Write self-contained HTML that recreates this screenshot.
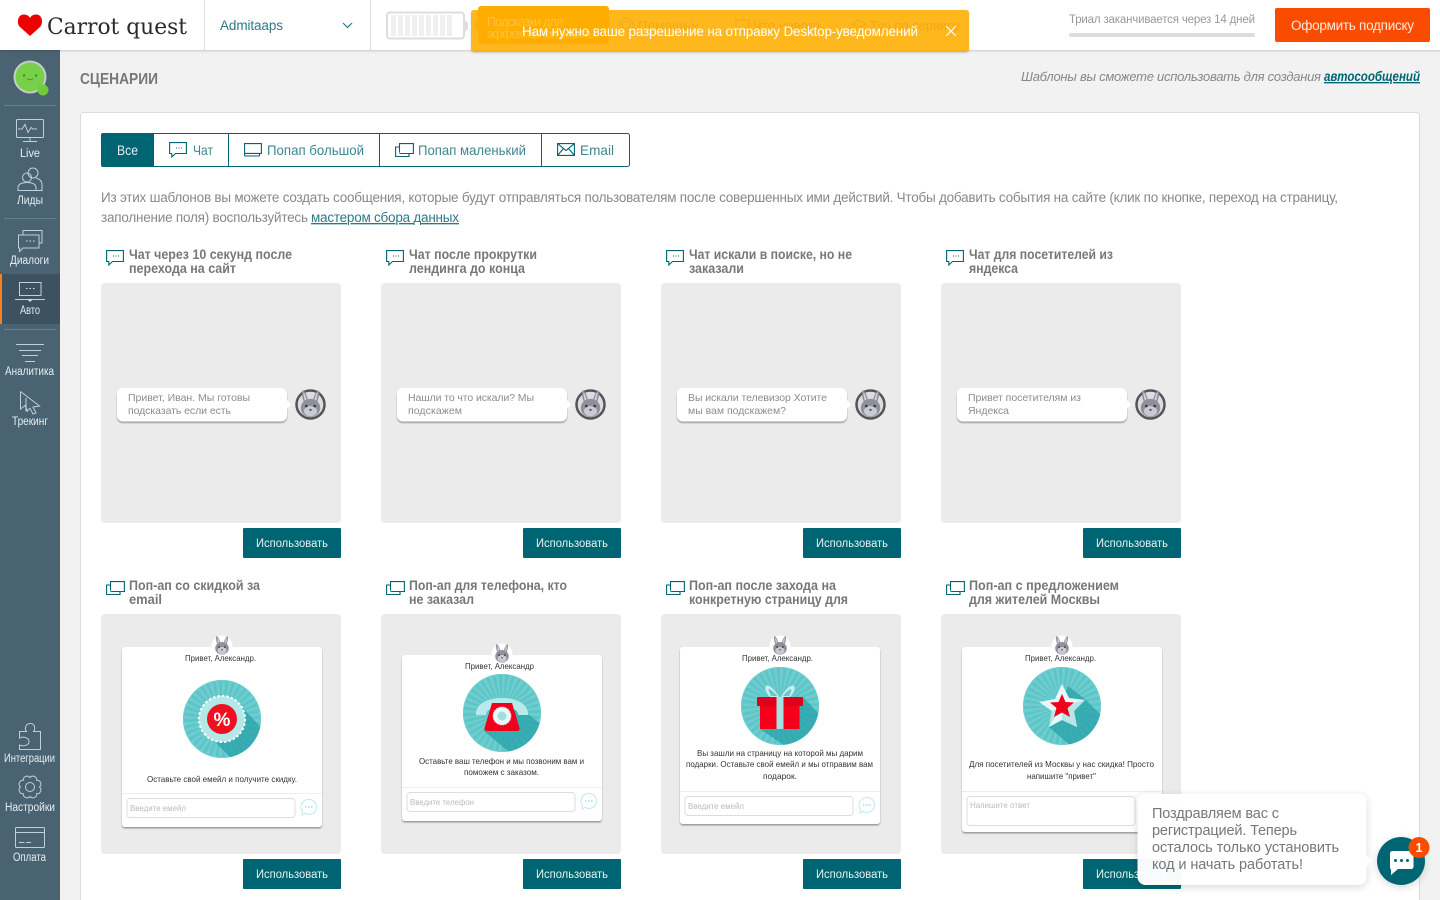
<!DOCTYPE html>
<html lang="ru">
<head>
<meta charset="utf-8">
<title>Сценарии</title>
<style>
html,body{margin:0;padding:0;width:1440px;height:900px;overflow:hidden;background:#f2f2f2}
svg{display:block;font-family:"Liberation Sans",sans-serif}
.s{fill:none;stroke:#bfd0d9;stroke-width:1}
.l{fill:#e6edf0;font-size:11.5px}
.t{fill:#777;font-size:13.5px;font-weight:bold}
.b{fill:#e8f2f3;font-size:11.5px}
.c{fill:#8c8c8c;font-size:10.5px}
.p{fill:#333;font-size:8.5px}
.h{fill:#bbb;font-size:8.5px}
.i{fill:none;stroke:#006572;stroke-width:1.1}
.tb{fill:#3f8591;font-size:14px}
.g{fill:#8a8a8a;font-size:13px}
</style>
</head>
<body>
<svg width="1440" height="900" viewBox="0 0 1440 900" xmlns="http://www.w3.org/2000/svg">
<defs>
<filter id="hs" x="-5%" y="-20%" width="110%" height="150%"><feDropShadow dx="0" dy="1" stdDeviation="1" flood-color="#000" flood-opacity=".18"/></filter>
<filter id="bs" x="-10%" y="-20%" width="120%" height="150%"><feDropShadow dx="0" dy="1.5" stdDeviation=".7" flood-color="#777" flood-opacity=".7"/></filter>
<filter id="ts" x="-15%" y="-20%" width="130%" height="140%"><feDropShadow dx="0" dy="2" stdDeviation="4" flood-color="#000" flood-opacity=".16"/></filter>
<clipPath id="cc"><circle r="39"/></clipPath>
<g id="rb">
<path d="M-5-3C-7-7-7-11.500-6-12S-2.500-8-2-4.500H2C2.500-8 5-12 6-12S7-7 5-3z" fill="#8f909c"/>
<path d="M-4.300-4C-5.200-7-5.500-9.500-5.300-10.200S-3.300-7-3-4zM4.300-4C5.200-7 5.500-9.500 5.300-10.200S3.300-7 3-4z" fill="#d3d3da"/>
<ellipse cy="1.500" rx="7.500" ry="7" fill="#8f909c"/>
<ellipse cy="4" rx="5" ry="4" fill="#c9cad1"/>
<circle cx="-3.200" cy="0" r="1" fill="#333"/><circle cx="3.200" cy="0" r="1" fill="#333"/>
<circle cy="3" r=".9" fill="#555"/>
</g>
<g id="ic-chat"><path d="M.6.600H17.400V11.500H6.500L2.800 15V11.500H.6z"/><path d="M7 6h1M9.500 6h1M12 6h1" stroke-width="1"/></g>
<g id="ic-pop"><path d="M4.500 9.600V.6H18.400V10.500H4.500M4.500 4H.6V13.500H14V10.500"/></g>
<g id="sun">
<circle r="39" fill="#5cc5c8"/>
<circle r="19.500" fill="none" stroke="#70cdcf" stroke-width="39" stroke-dasharray="1.700 1.700"/>
<circle r="38.500" fill="none" stroke="#6fcfd0" stroke-width="1"/>
</g>
</defs>

<!-- page -->
<rect width="1440" height="900" fill="#f2f2f2"/>

<!-- main panel -->
<rect x="80.500" y="112.500" width="1339" height="800" rx="3" fill="#fff" stroke="#dcdcdc"/>
<text x="80" y="84" font-size="16" font-weight="bold" fill="#777" textLength="78" lengthAdjust="spacingAndGlyphs">СЦЕНАРИИ</text>
<text x="1021" y="81" font-size="13" font-style="italic" fill="#888" textLength="300">Шаблоны вы сможете использовать для создания</text>
<text x="1324" y="81" font-size="13.500" font-style="italic" font-weight="bold" fill="#006572" text-decoration="underline" textLength="96" lengthAdjust="spacingAndGlyphs">автосообщений</text>

<!-- tabs -->
<rect x="101.500" y="133.500" width="528" height="33" rx="2" fill="#fff" stroke="#006572"/>
<path d="M103 133H154V167H103Q101 167 101 165V135Q101 133 103 133z" fill="#006572"/>
<path d="M228.500 134V166M379.500 134V166M541.500 134V166" stroke="#006572" fill="none"/>
<text x="117" y="155" font-size="14" fill="#e4f0f2" textLength="21" lengthAdjust="spacingAndGlyphs">Все</text>
<use href="#ic-chat" x="169" y="142" class="i"/>
<text x="193" y="155" class="tb" textLength="20" lengthAdjust="spacingAndGlyphs">Чат</text>
<path class="i" d="M244.600 143.600H261.400V153.400H244.600zM244.500 156H259.500"/>
<path class="i" d="M244.600 153V156M259.500 153.500V156"/>
<text x="267" y="155" class="tb" textLength="97" lengthAdjust="spacingAndGlyphs">Попап большой</text>
<use href="#ic-pop" x="395" y="143" class="i"/>
<text x="418" y="155" class="tb" textLength="108" lengthAdjust="spacingAndGlyphs">Попап маленький</text>
<path class="i" d="M557.600 143.600H574.400V155.400H557.600zM557.600 143.600L566 150.500 574.400 143.600M557.600 155.400L563.500 148.500M574.400 155.400L568.500 148.500"/>
<text x="580" y="155" class="tb" textLength="34" lengthAdjust="spacingAndGlyphs">Email</text>

<text x="101" y="202" font-size="13.500" fill="#888" textLength="1237">Из этих шаблонов вы можете создать сообщения, которые будут отправляться пользователям после совершенных ими действий. Чтобы добавить события на сайте (клик по кнопке, переход на страницу,</text>
<text x="101" y="222" font-size="13.500" fill="#888" textLength="207">заполнение поля) воспользуйтесь</text>
<text x="311" y="222" font-size="13.500" fill="#2b7a85" text-decoration="underline" textLength="148">мастером сбора данных</text>

<!-- row 1 titles -->
<use href="#ic-chat" x="106" y="250" class="i"/><use href="#ic-chat" x="386" y="250" class="i"/><use href="#ic-chat" x="666" y="250" class="i"/><use href="#ic-chat" x="946" y="250" class="i"/>
<text x="129" y="259" class="t" textLength="163" lengthAdjust="spacingAndGlyphs">Чат через 10 секунд после</text>
<text x="129" y="273" class="t" textLength="107" lengthAdjust="spacingAndGlyphs">перехода на сайт</text>
<text x="409" y="259" class="t" textLength="128" lengthAdjust="spacingAndGlyphs">Чат после прокрутки</text>
<text x="409" y="273" class="t" textLength="116" lengthAdjust="spacingAndGlyphs">лендинга до конца</text>
<text x="689" y="259" class="t" textLength="163" lengthAdjust="spacingAndGlyphs">Чат искали в поиске, но не</text>
<text x="689" y="273" class="t" textLength="55" lengthAdjust="spacingAndGlyphs">заказали</text>
<text x="969" y="259" class="t" textLength="144" lengthAdjust="spacingAndGlyphs">Чат для посетителей из</text>
<text x="969" y="273" class="t" textLength="49" lengthAdjust="spacingAndGlyphs">яндекса</text>

<!-- cards -->
<g fill="#ebebeb">
<rect x="101" y="283" width="240" height="240" rx="4"/><rect x="381" y="283" width="240" height="240" rx="4"/><rect x="661" y="283" width="240" height="240" rx="4"/><rect x="941" y="283" width="240" height="240" rx="4"/>
<rect x="101" y="614" width="240" height="240" rx="4"/><rect x="381" y="614" width="240" height="240" rx="4"/><rect x="661" y="614" width="240" height="240" rx="4"/><rect x="941" y="614" width="240" height="240" rx="4"/>
</g>

<g id="bub1">
<rect x="117" y="388" width="170" height="33.500" rx="6" fill="#fff" filter="url(#bs)"/>
<path d="M287 400L291 404.500 287 409z" fill="#fff"/>
<circle cx="310.500" cy="404.500" r="14" fill="#dcdce2" stroke="#555" stroke-width="2.500"/>
<use href="#rb" transform="translate(310.500 406) scale(1.300)"/>
</g>
<use href="#bub1" x="280"/><use href="#bub1" x="560"/><use href="#bub1" x="840"/>

<text x="128" y="401" class="c" textLength="122">Привет, Иван. Мы готовы</text>
<text x="128" y="414" class="c" textLength="103">подсказать если есть</text>
<text x="408" y="401" class="c" textLength="126">Нашли то что искали? Мы</text>
<text x="408" y="414" class="c" textLength="54">подскажем</text>
<text x="688" y="401" class="c" textLength="139">Вы искали телевизор Хотите</text>
<text x="688" y="414" class="c" textLength="98">мы вам подскажем?</text>
<text x="968" y="401" class="c" textLength="113">Привет посетителям из</text>
<text x="968" y="414" class="c" textLength="41">Яндекса</text>

<!-- buttons -->
<g fill="#006572">
<rect x="243" y="528" width="98" height="30" rx="1"/><rect x="523" y="528" width="98" height="30" rx="1"/><rect x="803" y="528" width="98" height="30" rx="1"/><rect x="1083" y="528" width="98" height="30" rx="1"/>
<rect x="243" y="859" width="98" height="30" rx="1"/><rect x="523" y="859" width="98" height="30" rx="1"/><rect x="803" y="859" width="98" height="30" rx="1"/><rect x="1083" y="859" width="98" height="30" rx="1"/>
</g>
<text x="256" y="547" class="b" textLength="72" lengthAdjust="spacingAndGlyphs">Использовать</text>
<text x="536" y="547" class="b" textLength="72" lengthAdjust="spacingAndGlyphs">Использовать</text>
<text x="816" y="547" class="b" textLength="72" lengthAdjust="spacingAndGlyphs">Использовать</text>
<text x="1096" y="547" class="b" textLength="72" lengthAdjust="spacingAndGlyphs">Использовать</text>
<text x="256" y="878" class="b" textLength="72" lengthAdjust="spacingAndGlyphs">Использовать</text>
<text x="536" y="878" class="b" textLength="72" lengthAdjust="spacingAndGlyphs">Использовать</text>
<text x="816" y="878" class="b" textLength="72" lengthAdjust="spacingAndGlyphs">Использовать</text>
<text x="1096" y="878" class="b" textLength="72" lengthAdjust="spacingAndGlyphs">Использовать</text>

<!-- row 2 titles -->
<use href="#ic-pop" x="106" y="581" class="i"/><use href="#ic-pop" x="386" y="581" class="i"/><use href="#ic-pop" x="666" y="581" class="i"/><use href="#ic-pop" x="946" y="581" class="i"/>
<text x="129" y="590" class="t" textLength="131" lengthAdjust="spacingAndGlyphs">Поп-ап со скидкой за</text>
<text x="129" y="604" class="t" textLength="33" lengthAdjust="spacingAndGlyphs">email</text>
<text x="409" y="590" class="t" textLength="158" lengthAdjust="spacingAndGlyphs">Поп-ап для телефона, кто</text>
<text x="409" y="604" class="t" textLength="65" lengthAdjust="spacingAndGlyphs">не заказал</text>
<text x="689" y="590" class="t" textLength="147" lengthAdjust="spacingAndGlyphs">Поп-ап после захода на</text>
<text x="689" y="604" class="t" textLength="159" lengthAdjust="spacingAndGlyphs">конкретную страницу для</text>
<text x="969" y="590" class="t" textLength="150" lengthAdjust="spacingAndGlyphs">Поп-ап с предложением</text>
<text x="969" y="604" class="t" textLength="131" lengthAdjust="spacingAndGlyphs">для жителей Москвы</text>

<!-- popup 1 -->
<circle cx="222" cy="646" r="10.500" fill="#fff"/>
<rect x="122" y="647" width="200" height="180" rx="3" fill="#fff" filter="url(#bs)"/>
<use href="#rb" transform="translate(222 647) scale(.9)"/>
<text x="185" y="661" class="p" textLength="71" lengthAdjust="spacingAndGlyphs">Привет, Александр.</text>
<g transform="translate(222 719)">
<use href="#sun"/>
<g clip-path="url(#cc)"><path d="M-12 18L18-14 50 20 20 50z" fill="#23a0a6" opacity=".7"/></g>
<circle r="23" fill="#b4e8e8" stroke="#fff" stroke-width="2" stroke-dasharray="2.500 2"/>
<circle r="15" fill="#ee1020"/>
<text x="0" y="7" text-anchor="middle" font-size="19" font-weight="bold" fill="#fff">%</text>
</g>
<text x="147" y="782" class="p" textLength="150" lengthAdjust="spacingAndGlyphs">Оставьте свой емейл и получите скидку.</text>
<path d="M122 793.500H322" stroke="#eee"/>
<rect x="127" y="798.500" width="168" height="19" rx="3" fill="#fff" stroke="#ddd"/>
<text x="130" y="811" class="h" textLength="56" lengthAdjust="spacingAndGlyphs">Введите емейл</text>
<path id="send" d="M308.500 799.500a7.500 7.500 0 1 1-3.500 13.800L302 815l.5-3.500a7.500 7.500 0 0 1 6-12z" fill="none" stroke="#bfe9ec"/>
<path d="M305 807h1.500M308 807h1.500M311 807h1.500" stroke="#9adfe3" stroke-width="1.500"/>

<!-- popup 2 -->
<circle cx="502" cy="654" r="10.500" fill="#fff"/>
<rect x="402" y="655" width="200" height="166" rx="3" fill="#fff" filter="url(#bs)"/>
<use href="#rb" transform="translate(502 655) scale(.9)"/>
<text x="465" y="669" class="p" textLength="69" lengthAdjust="spacingAndGlyphs">Привет, Александр</text>
<g transform="translate(502 713)">
<use href="#sun"/>
<g clip-path="url(#cc)"><path d="M-18 18L18-7 26 1 50 20 20 50z" fill="#23a0a6" opacity=".7"/></g>
<path d="M-26 2C-27-9-14-15 0-15S27-9 26 2L16 2C16-3 10-6 0-6S-16-3-16 2z" fill="#b7ebeb"/>
<path d="M-10-10H10L17.500 15Q18 18 15 18H-15Q-18 18-17.500 15z" fill="#f0001a"/>
<circle cy="3" r="9" fill="#e8f8f8" stroke="#f9bcc0" stroke-dasharray="1.500 1.500"/>
<circle cy="3" r="4.500" fill="#9fdfe2"/>
</g>
<text x="419" y="764" class="p" textLength="165" lengthAdjust="spacingAndGlyphs">Оставьте ваш телефон и мы позвоним вам и</text>
<text x="464" y="775" class="p" textLength="75" lengthAdjust="spacingAndGlyphs">поможем с заказом.</text>
<path d="M402 787.500H602" stroke="#eee"/>
<rect x="407" y="792.500" width="168" height="19" rx="3" fill="#fff" stroke="#ddd"/>
<text x="410" y="805" class="h" textLength="64" lengthAdjust="spacingAndGlyphs">Введите телефон</text>
<use href="#send" x="280" y="-6"/>
<path d="M585 801h1.500M588 801h1.500M591 801h1.500" stroke="#9adfe3" stroke-width="1.500"/>

<!-- popup 3 -->
<circle cx="780" cy="646" r="10.500" fill="#fff"/>
<rect x="680" y="647" width="200" height="177" rx="3" fill="#fff" filter="url(#bs)"/>
<use href="#rb" transform="translate(780 647) scale(.9)"/>
<text x="742" y="661" class="p" textLength="71" lengthAdjust="spacingAndGlyphs">Привет, Александр.</text>
<g transform="translate(780 706)">
<use href="#sun"/>
<g clip-path="url(#cc)"><path d="M-20 23L23-9 50 20 20 50z" fill="#23a0a6" opacity=".7"/></g>
<path d="M-1-9C-6-18-12-22-14-20S-14-13-10-9zM-9-10C-11-14-12-17-11-17S-6-14-3-10zM1-9C6-18 12-22 14-20S14-13 10-9zM9-10C11-14 12-17 11-17S6-14 3-10z" fill="#c7eeee"/>
<rect x="-20" y="0" width="39.500" height="23" fill="#f5001a"/>
<rect x="-23" y="-9" width="46" height="9" rx="1" fill="#e0001a"/>
<rect x="-3.500" y="-9" width="7" height="32" fill="#a5e2e4"/>
</g>
<text x="697" y="756" class="p" textLength="166" lengthAdjust="spacingAndGlyphs">Вы зашли на страницу на которой мы дарим</text>
<text x="686" y="767" class="p" textLength="187" lengthAdjust="spacingAndGlyphs">подарки. Оставьте свой емейл и мы отправим вам</text>
<text x="763" y="779" class="p" textLength="34" lengthAdjust="spacingAndGlyphs">подарок.</text>
<path d="M680 791.500H880" stroke="#eee"/>
<rect x="685" y="796.500" width="168" height="19" rx="3" fill="#fff" stroke="#ddd"/>
<text x="688" y="809" class="h" textLength="56" lengthAdjust="spacingAndGlyphs">Введите емейл</text>
<use href="#send" x="558" y="-2"/>
<path d="M863 805h1.500M866 805h1.500M869 805h1.500" stroke="#9adfe3" stroke-width="1.500"/>

<!-- popup 4 -->
<circle cx="1062" cy="646" r="10.500" fill="#fff"/>
<rect x="962" y="647" width="200" height="185" rx="3" fill="#fff" filter="url(#bs)"/>
<use href="#rb" transform="translate(1062 647) scale(.9)"/>
<text x="1025" y="661" class="p" textLength="71" lengthAdjust="spacingAndGlyphs">Привет, Александр.</text>
<g transform="translate(1062 706)">
<use href="#sun"/>
<g clip-path="url(#cc)"><path d="M-13 21L6-20 24-6 50 20 20 50z" fill="#23a0a6" opacity=".7"/></g>
<path d="M0-22L7-8 23-6 12 5 15 21 0 14-13 21-10 5-23-4-7-7z" fill="#e8f7f7"/>
<path d="M0 0L23-6 12 5 15 21zM0 0L-13 21-10 5zM0 0L15 21 0 14z" fill="#b8e6e8"/>
<path d="M0-12L3.500-4 12-3.500 5.500 2 8 11 0 6.500-8 11-5.500 2-12-3.500-3.500-4z" fill="#f0001a"/>
</g>
<text x="969" y="767" class="p" textLength="185" lengthAdjust="spacingAndGlyphs">Для посетителей из Москвы у нас скидка! Просто</text>
<text x="1027" y="779" class="p" textLength="69" lengthAdjust="spacingAndGlyphs">напишите "привет"</text>
<path d="M962 791.500H1162" stroke="#eee"/>
<rect x="967" y="796.500" width="168" height="29" rx="3" fill="#fff" stroke="#ddd"/>
<text x="970" y="808" class="h" textLength="60" lengthAdjust="spacingAndGlyphs">Напишите ответ</text>

<!-- sidebar -->
<rect x="0" y="50" width="60" height="850" fill="#4a6373"/>
<rect x="0" y="274" width="60" height="50" fill="#3d5261"/>
<rect x="0" y="274" width="2" height="50" fill="#f5821f"/>
<path d="M4 105.500H56M4 218.500H56M4 329.500H56" stroke="#66808f"/>
<circle cx="30" cy="77" r="16.500" fill="#c4cdc6"/>
<circle cx="30" cy="77" r="14.500" fill="#78d04a"/>
<circle cx="24" cy="75.500" r="1.300" fill="#3e9a1c"/><circle cx="36" cy="75.500" r="1.300" fill="#3e9a1c"/>
<path d="M27 78.500Q30 81 33 78.500" fill="none" stroke="#3e9a1c"/>
<circle cx="43" cy="90" r="5.500" fill="#6ecb3c"/>

<g class="s">
<rect x="16.500" y="119.500" width="27" height="18" rx="1"/>
<path d="M18 129H22L25 124.500 28 132.500 31 127.500 33 129H37M30 138V141M23 141.500H37"/>
<circle cx="33" cy="173" r="5"/>
<path d="M36 178C40 179 42 181 42 184.500V190.500H36"/>
<circle cx="27" cy="177.500" r="4.500"/>
<path d="M18 190.500V188C18 184 22 182.500 27 182.500S36 184 36 188V190.500z"/>
<path d="M23 235V230.500H42V243H39"/>
<path d="M18.500 235H39V248H23L19.500 251.500V248H18.500z"/>
<path d="M19.500 282.500H41V295.500H19.500zM15 299.500H45"/>
<path d="M16 344.500H44M19 350.500H41M22 355.500H38M25 361.500H35"/>
<path d="M20.500 391.500L39.500 406 33 407 36 413 33 414 30 408.500 26 411 26 398"/>
<path d="M20.500 391.500V409L25 405.500 28 412"/>
<path d="M19.500 731.500H26.500C24.500 729 25 724 30 723.500S35.500 729 33.500 731.500H40.500V749.500H19.500V745C24 747 29 745 29 741.500S24 736 19.500 738z"/>
<path d="M39.500 787A3.800 3.800 0 0 1 36.700 793.700A3.800 3.800 0 0 1 30 796.500A3.800 3.800 0 0 1 23.300 793.700A3.800 3.800 0 0 1 20.500 787A3.800 3.800 0 0 1 23.300 780.300A3.800 3.800 0 0 1 30 777.500A3.800 3.800 0 0 1 36.700 780.300A3.800 3.800 0 0 1 39.500 787z"/>
<circle cx="30" cy="787" r="4.500"/>
<rect x="15.500" y="827.500" width="29" height="20" rx="1"/>
<path d="M15.500 832.500H44.500M19 842.500H24.500M26 842.500H31"/>
</g>
<path d="M26 241h1.500M29.500 241h1.500M33 241h1.500M26 288.500h1.500M29.500 288.500h1.500M33 288.500h1.500" stroke="#dfe8ec"/>
<path d="M27 299H33L30 302z" fill="#d3e0e6"/>

<text x="20" y="157" class="l" textLength="20" lengthAdjust="spacingAndGlyphs">Live</text>
<text x="17" y="204" class="l" textLength="26" lengthAdjust="spacingAndGlyphs">Лиды</text>
<text x="10" y="264" class="l" textLength="39" lengthAdjust="spacingAndGlyphs">Диалоги</text>
<text x="20" y="314" class="l" textLength="20" lengthAdjust="spacingAndGlyphs">Авто</text>
<text x="5" y="375" class="l" textLength="49" lengthAdjust="spacingAndGlyphs">Аналитика</text>
<text x="12" y="425" class="l" textLength="36" lengthAdjust="spacingAndGlyphs">Трекинг</text>
<text x="4" y="762" class="l" textLength="51" lengthAdjust="spacingAndGlyphs">Интеграции</text>
<text x="5" y="811" class="l" textLength="50" lengthAdjust="spacingAndGlyphs">Настройки</text>
<text x="13" y="861" class="l" textLength="33" lengthAdjust="spacingAndGlyphs">Оплата</text>

<!-- header -->
<rect x="0" y="0" width="1440" height="50" fill="#fff" filter="url(#hs)"/>
<path d="M204.500 0V50M370.500 0V50" stroke="#ddd"/>
<path d="M30 36L20 27C16 23 18 14 24 14.500 27 14.500 29 16 30 18 31 16 33 14.500 36 14.500 42 14 44 23 40 27z" fill="#ef0000"/>
<text x="47" y="34" font-family="DejaVu Serif" font-size="22" fill="#2a2a2a" textLength="140" lengthAdjust="spacingAndGlyphs">Carrot quest</text>
<text x="220" y="30" font-size="13.500" fill="#2b7a85" textLength="63">Admitaaps</text>
<path d="M343 23L347.500 27.500 352 23" fill="none" stroke="#2b7a85" stroke-width="1.200"/>
<rect x="387" y="12.500" width="77" height="26" rx="3" fill="#fff" stroke="#ddd" stroke-width="2"/>
<path d="M465 20L468 23V29L465 32z" fill="#ddd"/>
<g fill="#f0f0f0">
<rect x="391" y="15" width="5" height="21"/><rect x="398" y="15" width="5" height="21"/><rect x="405" y="15" width="5" height="21"/><rect x="412" y="15" width="5" height="21"/><rect x="419" y="15" width="5" height="21"/><rect x="426" y="15" width="5" height="21"/><rect x="433" y="15" width="5" height="21"/><rect x="440" y="15" width="5" height="21"/><rect x="447" y="15" width="5" height="21"/>
</g>

<text x="638" y="30" class="g" textLength="52">Помощь</text>
<circle cx="626" cy="25" r="7" fill="none" stroke="#888"/><circle cx="626" cy="25" r="4" fill="none" stroke="#888"/>
<path d="M691 23L695 27 699 23" fill="none" stroke="#888"/>
<text x="753" y="30" class="g" textLength="67">Что нового</text>
<rect x="736" y="20" width="13" height="11" fill="none" stroke="#888"/>
<text x="870" y="30" class="g" textLength="90">Тур по сервису</text>
<path d="M852 24L859 20 866 24 859 28zM853 28L859 32 865 28" fill="none" stroke="#888"/>

<text x="1069" y="23" font-size="11.500" fill="#999" textLength="186">Триал заканчивается через 14 дней</text>
<rect x="1069" y="33" width="186" height="4" rx="2" fill="#ddd"/>
<rect x="1275" y="8" width="155" height="34" rx="2" fill="#f94c00"/>
<text x="1291" y="30" font-size="13.500" fill="#ffe9dc" textLength="123">Оформить подписку</text>

<!-- orange hint + notification -->
<rect x="471" y="10" width="498" height="42" rx="3" fill="#ffae00" opacity=".88" filter="url(#hs)"/>
<rect x="478" y="6" width="131" height="38" rx="3" fill="#ffae00"/>
<path d="M478 20L474 25 478 30z" fill="#ffae00"/>
<text x="487" y="26" font-size="12.500" fill="#ffc03a" textLength="76">Подсказки для</text>
<text x="487" y="38" font-size="12.500" fill="#ffc03a" textLength="110">эффективной работы</text>
<text x="522" y="36" font-size="13.500" fill="#fff" textLength="396">Нам нужно ваше разрешение на отправку Desktop-уведомлений</text>
<path d="M946 26L956 36M956 26L946 36" stroke="#fff" stroke-width="1.200"/>

<!-- chat widget -->
<rect x="1137.500" y="794" width="229" height="91" rx="8" fill="#fff" fill-opacity=".97" filter="url(#ts)"/>
<path d="M1366 855L1372 861 1366 867z" fill="#fff"/>
<text x="1152" y="818" font-size="14.500" fill="#777" textLength="127">Поздравляем вас с</text>
<text x="1152" y="835" font-size="14.500" fill="#777" textLength="145">регистрацией. Теперь</text>
<text x="1152" y="852" font-size="14.500" fill="#777" textLength="187">осталось только установить</text>
<text x="1152" y="869" font-size="14.500" fill="#777" textLength="151">код и начать работать!</text>
<circle cx="1401" cy="861" r="24" fill="#006572" filter="url(#ts)"/>
<path d="M1393 851H1411Q1413.500 851 1413.500 853.500V866.500Q1413.500 869 1411 869H1398L1391 875V869.500Q1390 869 1390 866.500V853.500Q1390 851 1393 851z" fill="#fff"/>
<circle cx="1395.500" cy="860.500" r="1.500" fill="#006572"/><circle cx="1401.500" cy="860.500" r="1.500" fill="#006572"/><circle cx="1407.500" cy="860.500" r="1.500" fill="#006572"/>
<circle cx="1419" cy="847.500" r="10.500" fill="#f94c00"/>
<text x="1419" y="852" text-anchor="middle" font-size="12.500" font-weight="bold" fill="#fff">1</text>
</svg>
</body>
</html>
